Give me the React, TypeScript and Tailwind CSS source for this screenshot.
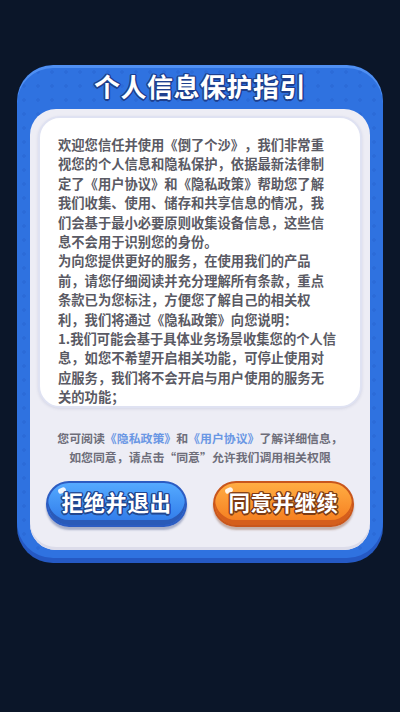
import React from 'react';

const font = { fontFamily: '"Noto Sans CJK SC", "Noto Sans", sans-serif' };

function GameButton({ label, tone }: { label: string; tone: 'blue' | 'orange' }) {
  const blue = tone === 'blue';
  return (
    <button
      className={
        blue
          ? 'relative h-[46px] w-[141px] rounded-full border-2 border-[#2c5cc2] bg-gradient-to-b from-[#55aaff] to-[#2f78e8] shadow-[inset_0_-5px_0_#2a5ab8,0_3px_2px_rgba(40,60,120,0.35)]'
          : 'relative h-[46px] w-[141px] rounded-full border-2 border-[#c8561c] bg-gradient-to-b from-[#ffad42] to-[#f47a1c] shadow-[inset_0_-5px_0_#d55e1c,0_3px_2px_rgba(120,60,30,0.35)]'
      }
    >
      <span className="absolute left-[10px] top-[5px] h-[5px] w-[8px] -rotate-[25deg] rounded-full bg-white/90" />
      <span
        className={
          blue
            ? 'relative -top-[2px] text-[21.5px] font-bold tracking-[0.5px] text-white [text-shadow:1.5px_0_0_#21468f,-1.5px_0_0_#21468f,0_1.5px_0_#21468f,0_-1.5px_0_#21468f,1px_1px_0_#21468f,-1px_-1px_0_#21468f,1px_-1px_0_#21468f,-1px_1px_0_#21468f]'
            : 'relative -top-[2px] text-[21.5px] font-bold tracking-[0.5px] text-white [text-shadow:1.5px_0_0_#7c3a14,-1.5px_0_0_#7c3a14,0_1.5px_0_#7c3a14,0_-1.5px_0_#7c3a14,1px_1px_0_#7c3a14,-1px_-1px_0_#7c3a14,1px_-1px_0_#7c3a14,-1px_1px_0_#7c3a14]'
        }
      >
        {label}
      </span>
    </button>
  );
}

export default function App() {
  return (
    <main className="flex h-[712px] w-full justify-center bg-[#0b1629] pt-[65px]" style={font}>
      {/* Dialog card */}
      <div className="flex h-[498px] w-[366px] flex-col rounded-[36px] bg-[#2f72e0] bg-[radial-gradient(circle,#2b6bd8_1.5px,transparent_2px)] bg-[length:14px_14px] px-[13px] pb-[13px] shadow-[inset_0_3px_0_#4f8ff2,inset_0_-5px_0_#2559c4]">
        {/* Title */}
        <h1 className="flex h-[44px] items-center justify-center pb-[3px] text-[26px] font-bold tracking-[0.5px] text-white [text-shadow:1.5px_0_0_#1d3f8e,-1.5px_0_0_#1d3f8e,0_1.5px_0_#1d3f8e,0_-1.5px_0_#1d3f8e,1px_1px_0_#1d3f8e,-1px_-1px_0_#1d3f8e,1px_-1px_0_#1d3f8e,-1px_1px_0_#1d3f8e]">
          个人信息保护指引
        </h1>

        {/* Inner panel */}
        <div className="flex flex-1 flex-col rounded-[26px] bg-[#ededf5] px-[8px] pt-[7px] shadow-[inset_0_-3px_0_#dcdcea] [text-spacing-trim:space-all]">
          {/* Scrollable text box */}
          <div className="h-[292px] overflow-hidden rounded-[22px] border-2 border-[#dfe2f2] bg-white pl-[18px] pr-[23px] pt-[17px] shadow-[0_1px_3px_rgba(80,90,140,0.15)]">
            <div className="text-[13.3px] font-bold leading-[19.4px] text-[#5a5a64]">
              <p>
                欢迎您信任并使用《倒了个沙》，我们非常重视您的个人信息和隐私保护，依据最新法律制定了《用户协议》和《隐私政策》帮助您了解我们收集、使用、储存和共享信息的情况，我们会基于最小必要原则收集设备信息，这些信息不会用于识别您的身份。
              </p>
              <p>
                为向您提供更好的服务，在使用我们的产品前，请您仔细阅读并充分理解所有条款，重点条款已为您标注，方便您了解自己的相关权利，我们将通过《隐私政策》向您说明：
              </p>
              <p>
                1.我们可能会基于具体业务场景收集您的个人信息，如您不希望开启相关功能，可停止使用对应服务，我们将不会开启与用户使用的服务无关的功能；
              </p>
            </div>
          </div>

          {/* Note */}
          <p className="mt-[20px] text-center text-[11.9px] font-bold leading-[19px] text-[#6e6e7a]">
            您可阅读<span className="text-[#6a97e4]">《隐私政策》</span>和
            <span className="text-[#6a97e4]">《用户协议》</span>了解详细信息，
            <br />
            如您同意，请点击“同意”允许我们调用相关权限
          </p>

          {/* Actions */}
          <div className="mt-[15px] flex justify-between px-[8px]">
            <GameButton label="拒绝并退出" tone="blue" />
            <GameButton label="同意并继续" tone="orange" />
          </div>
        </div>
      </div>
    </main>
  );
}
